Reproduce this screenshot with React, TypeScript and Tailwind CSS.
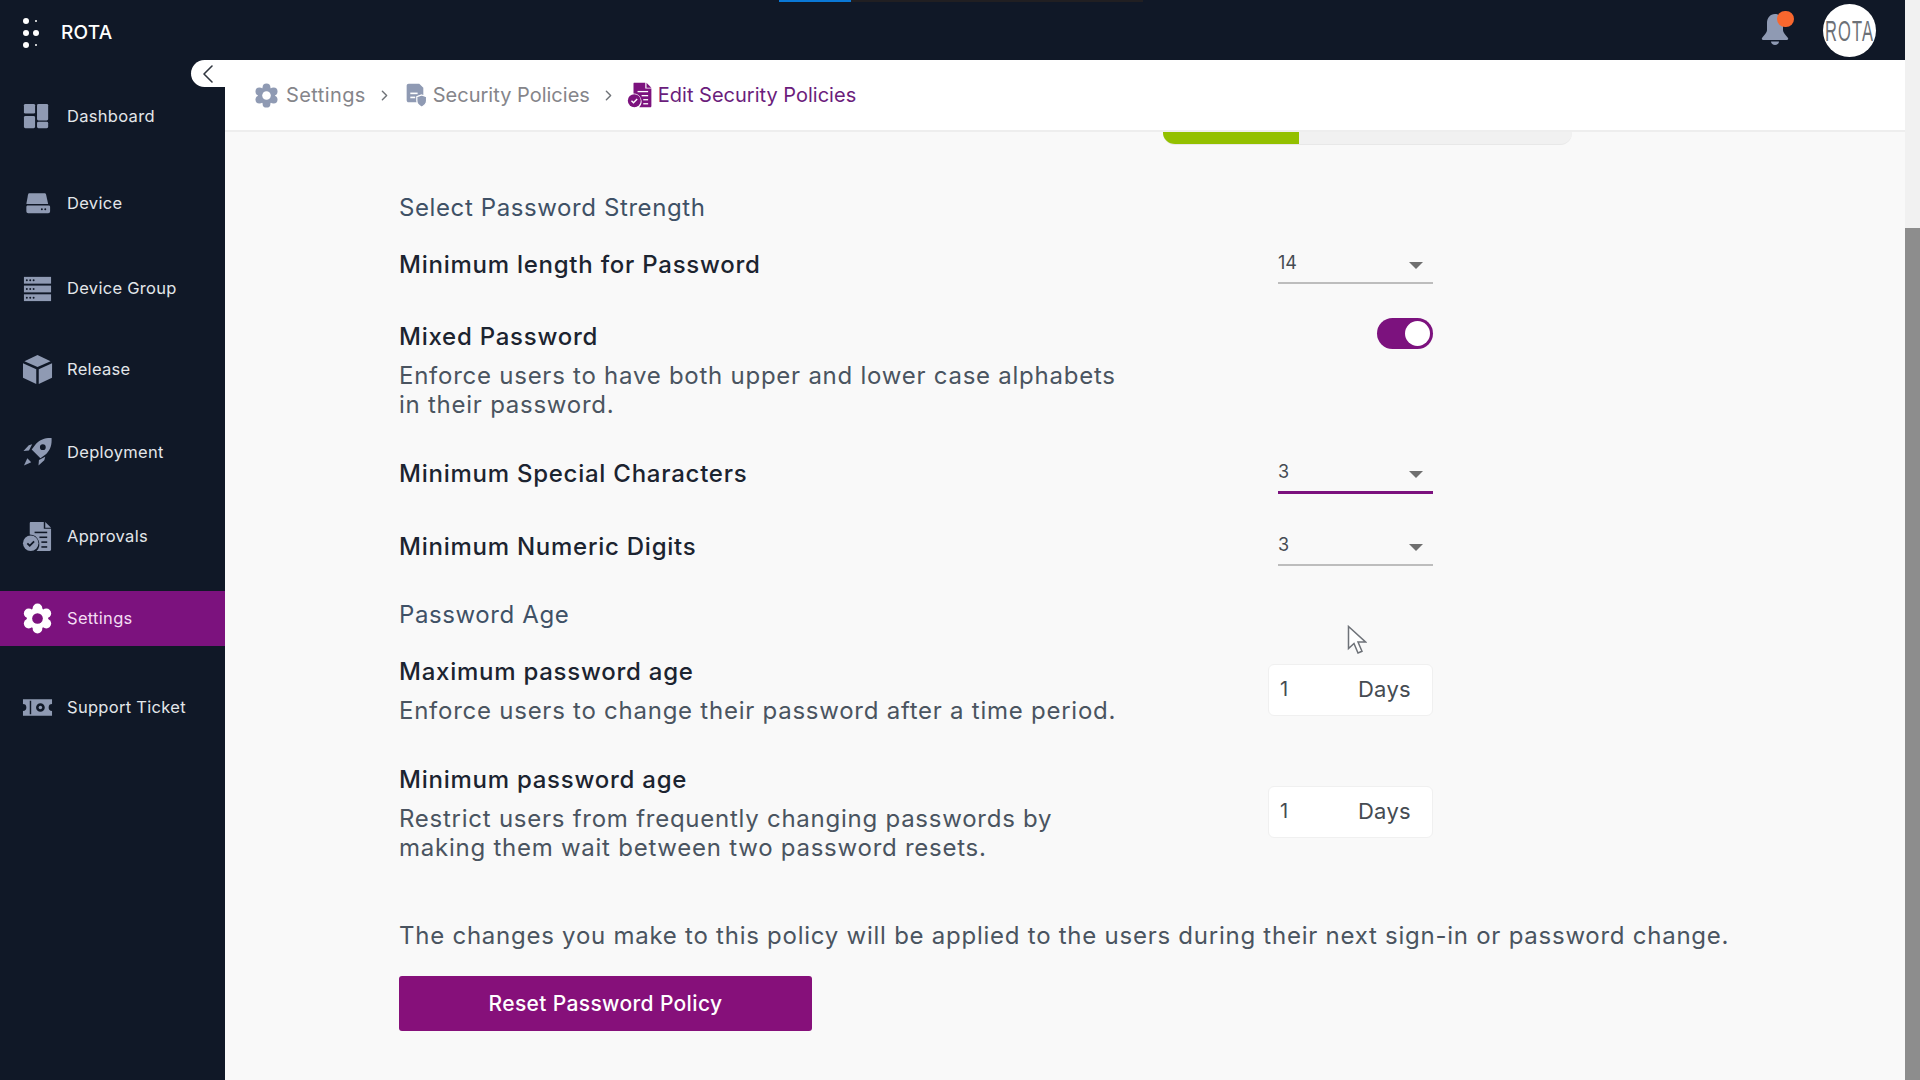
import React from 'react';
import { ChevronLeft, ChevronRight } from 'lucide-react';

const font = { fontFamily: 'Inter, "Liberation Sans", sans-serif' };

function GearIcon({ className, holeClass }: { className?: string; holeClass: string }) {
  const lobes = [0, 60, 120, 180, 240, 300];
  return (
    <svg viewBox="0 0 32 32" className={className} fill="currentColor">
      {lobes.map((a) => (
        <circle
          key={a}
          cx={16 + 10.5 * Math.cos((a * Math.PI) / 180 + Math.PI / 6)}
          cy={16 + 10.5 * Math.sin((a * Math.PI) / 180 + Math.PI / 6)}
          r="5"
        />
      ))}
      <circle cx="16" cy="16" r="11" />
      <circle cx="16" cy="16" r="5.5" className={holeClass} />
    </svg>
  );
}

function DashboardIcon() {
  return (
    <svg viewBox="0 0 32 32" className="w-[31px] h-[31px]" fill="currentColor">
      <rect x="2" y="3" width="11.5" height="10" rx="1.5" />
      <rect x="15.5" y="3" width="11.5" height="17" rx="1.5" />
      <rect x="2" y="15.5" width="11.5" height="12.5" rx="1.5" />
      <rect x="15.5" y="21.5" width="11.5" height="6.5" rx="1.5" />
    </svg>
  );
}

function DeviceIcon() {
  return (
    <svg viewBox="0 0 32 32" className="w-[31px] h-[31px]" fill="currentColor">
      <path d="M8 5.5h15c1 0 1.6.5 1.9 1.5l2.1 9.5H4.5L6.2 7c.2-1 .8-1.5 1.8-1.5z" />
      <path fillRule="evenodd" d="M6 18h21.5c1 0 1.5.6 1.5 1.5v4.5c0 1.2-.8 2-2 2H6.500c-1.200 0-2-.8-2-2v-4.500c0-.9.6-1.500 1.500-1.500zM20.500 21a1 1 0 100 2 1 1 0 000-2zm3.500 0a1 1 0 100 2 1 1 0 000-2z" />
    </svg>
  );
}

function DeviceGroupIcon() {
  const rows = [4, 13, 22];
  return (
    <svg viewBox="0 0 32 32" className="w-[31px] h-[31px]" fill="currentColor">
      {rows.map((y) => (
        <g key={y}>
          <rect x="2" y={y} width="28" height="7" />
          <circle cx="5" cy={y + 3.5} r="1" fill="#101827" />
          <circle cx="8.500" cy={y + 3.5} r="1" fill="#101827" />
          <circle cx="12" cy={y + 3.5} r="1" fill="#101827" />
        </g>
      ))}
    </svg>
  );
}

function ReleaseIcon() {
  return (
    <svg viewBox="0 0 32 32" className="w-[31px] h-[31px]" fill="currentColor">
      <path d="M16 1l13.500 6.500L16 13.500 2.500 7.500z" />
      <path d="M1 9.500l13.700 6.200V31L1 24.500z" />
      <path d="M31 9.500l-13.700 6.200V31L31 24.500z" />
    </svg>
  );
}

function RocketIcon() {
  return (
    <svg viewBox="0 0 32 32" className="w-[31px] h-[31px]" fill="currentColor">
      <path fillRule="evenodd" d="M30.500 1c.5 6.500-1 12-5.500 16.500l-6 4.500-9-9 4.500-6C18.500 2.500 24 .700 30.500 1zM21.500 7.500a3 3 0 100 6 3 3 0 000-6z" />
      <path d="M10.500 7.500l-3.500 1-5.500 6 5.700-.5zM24 20.500l-1 3.500-6 5.500.5-5.700z" />
      <path d="M5.500 22l-3.500 7.500 7.500-3.500z" />
    </svg>
  );
}

function ApprovalIcon({ className, holeClass, strokeClass }: { className?: string; holeClass: string; strokeClass: string }) {
  return (
    <svg viewBox="0 0 32 32" className={className} fill="currentColor">
      <path d="M9 1h13.500v7h7.500v21.500c0 1-.6 1.500-1.500 1.500H15a10 10 0 00-7-17V2.500C8 1.600 8.200 1 9 1z" />
      <path d="M24 1l6 6h-6z" />
      <rect x="13" y="11" width="13" height="1.600" className={holeClass} />
      <rect x="18" y="16" width="8" height="1.600" className={holeClass} />
      <rect x="20" y="21" width="6" height="1.600" className={holeClass} />
      <rect x="20" y="26" width="6" height="1.600" className={holeClass} />
      <circle cx="9" cy="23" r="8" />
      <path d="M5.500 23l2.500 2.500 4.500-4.500" fill="none" strokeWidth="1.800" className={strokeClass} />
    </svg>
  );
}

function TicketIcon() {
  return (
    <svg viewBox="0 0 32 32" className="w-[31px] h-[31px]" fill="currentColor">
      <path fillRule="evenodd" d="M1 7.500h30v5a3.500 3.500 0 000 7v5H1v-5a3.500 3.500 0 000-7zM8 9v14h1.500V9zM19 11.500a4.500 4.500 0 100 9 4.500 4.500 0 000-9z" />
      <circle cx="19" cy="16" r="1.800" />
    </svg>
  );
}

function PolicyIcon() {
  return (
    <svg viewBox="0 0 32 32" className="w-[26px] h-[26px] text-[#8f9ab3]" fill="currentColor">
      <path d="M7 2h13l5 5v9.500h-6V25H7c-1.500 0-2.500-1-2.500-2.500v-18C4.500 3 5.500 2 7 2z" />
      <rect x="9" y="13" width="9" height="2" fill="#fff" />
      <rect x="9" y="18" width="6" height="2" fill="#fff" />
      <path d="M23 16l6 2v5c0 3.500-2.500 6-6 8-3.500-2-6-4.500-6-8v-5z" stroke="#fff" strokeWidth="1.500" />
    </svg>
  );
}

const navItems = [
  { label: 'Dashboard', icon: <DashboardIcon />, gap: 'mt-[29px]' },
  { label: 'Device', icon: <DeviceIcon />, gap: 'mt-[32px]' },
  { label: 'Device Group', icon: <DeviceGroupIcon />, gap: 'mt-[30px]' },
  { label: 'Release', icon: <ReleaseIcon />, gap: 'mt-[26px]' },
  { label: 'Deployment', icon: <RocketIcon />, gap: 'mt-[28px]' },
  {
    label: 'Approvals',
    icon: <ApprovalIcon className="w-[31px] h-[31px]" holeClass="fill-[#101827]" strokeClass="stroke-[#101827]" />,
    gap: 'mt-[29px]',
  },
  { label: 'Settings', icon: <GearIcon className="w-[31px] h-[31px]" holeClass="fill-[#7c127e]" />, gap: 'mt-[27px]', active: true },
  { label: 'Support Ticket', icon: <TicketIcon />, gap: 'mt-[34px]' },
];

function Sidebar() {
  return (
    <aside className="w-[225px] shrink-0 bg-[#101827] flex flex-col">
      {navItems.map((item) => (
        <div
          key={item.label}
          className={`${item.gap} h-[55px] shrink-0 flex items-center gap-[14px] pl-[22px] ${
            item.active ? 'bg-[#7c127e] text-white' : 'text-[#8f9ab3]'
          }`}
        >
          {item.icon}
          <span className={`text-[16.500px] tracking-[0.3px] ${item.active ? 'text-[#f3dcf3]' : 'text-[#e3e6ea]'}`}>
            {item.label}
          </span>
        </div>
      ))}
    </aside>
  );
}

function SelectBox({ value, focused, height }: { value: string; focused?: boolean; height: string }) {
  return (
    <div
      className={`w-[155px] ${height} ml-auto shrink-0 flex items-start justify-between pl-0 pr-[10px] ${
        focused ? 'border-b-[3px] border-[#7c127e]' : 'border-b-2 border-[#bdbdbd]'
      }`}
    >
      <span className="text-[18px] leading-[26px] text-[#454b52]">{value}</span>
      <span className="mt-[12px] w-0 h-0 border-x-[7px] border-x-transparent border-t-[7px] border-t-[#6f6f6f]" />
    </div>
  );
}

function DaysBox({ margin }: { margin: string }) {
  return (
    <div className={`${margin} w-[165px] h-[52px] ml-auto shrink-0 flex items-center justify-between pl-[11px] pr-[21px] pb-[2px] bg-white rounded-md border border-[#f0f0f0]`}>
      <span className="text-[20px] text-[#454b52]">1</span>
      <span className="text-[22px] tracking-[0.3px] text-[#454b52]">Days</span>
    </div>
  );
}

const titleClass = 'text-[24px] leading-[30px] font-[450] text-[#1c2430] tracking-[0.75px]';
const sectionClass = 'text-[24px] leading-[30px] text-[#3f5166] tracking-[0.6px]';
const descClass = 'text-[24px] leading-[29px] text-[#4a5460] tracking-[0.75px]';

export default function App() {
  return (
    <div className="relative h-screen w-full overflow-hidden flex bg-[#f1f1f1]" style={font}>
      <div className="flex-1 min-w-0 flex flex-col">
        {/* top bar */}
        <header className="relative h-[60px] shrink-0 bg-[#101827] flex items-start">
          <div className="absolute top-0 left-[779px] h-[2px] w-[72px] bg-[#0a78d6]" />
          <div className="absolute top-0 left-[851px] h-[2px] w-[292px] bg-[#211f22]" />
          <svg viewBox="0 0 20 32" className="ml-[22px] mt-[17px] w-[20px] h-[32px] text-white" fill="currentColor">
            <circle cx="4" cy="4" r="3" />
            <circle cx="14" cy="4" r="1" />
            <circle cx="4" cy="16" r="3" />
            <circle cx="14" cy="16" r="3" />
            <circle cx="4" cy="28" r="3" />
            <circle cx="14" cy="28" r="1" />
          </svg>
          <span className="ml-[19px] mt-[21px] text-[19px] leading-[24px] font-medium text-white tracking-[0.2px]">ROTA</span>
          <div className="ml-auto mr-[29px] self-center flex items-center gap-[28px]">
            <div className="relative w-[34px] h-[34px]">
              <svg viewBox="0 0 28 32" className="w-[28px] h-[32px] text-[#8f9ab3]" fill="currentColor">
                <path d="M14 1c5 0 8 4 8 9v7c0 3 3 5 5 8 .5 1 0 2-1 2H2c-1 0-1.500-1-1-2 2-3 5-5 5-8v-7c0-5 3-9 8-9z" />
                <path d="M10 28.500h8c0 2-2 3.500-4 3.500s-4-1.500-4-3.500z" />
              </svg>
              <span className="absolute -top-[2px] left-[16px] w-[17px] h-[16px] rounded-full bg-[#f8672e]" />
            </div>
            <div className="w-[53px] h-[53px] rounded-full bg-white flex items-center justify-center overflow-hidden">
              <span className="text-[30px] text-[#6d7177] scale-x-[0.55] tracking-[2px]" style={{ fontFamily: '"Liberation Sans", sans-serif' }}>
                ROTA
              </span>
            </div>
          </div>
        </header>

        <div className="flex-1 min-h-0 flex">
          <Sidebar />

          <main className="flex-1 min-w-0 flex flex-col bg-[#f9f9f9]">
            {/* breadcrumb */}
            <nav className="h-[72px] shrink-0 bg-white border-b-2 border-[#eeeeee] flex items-center pl-[29px] text-[20px]">
              <GearIcon className="w-[25px] h-[25px] text-[#8f9ab3]" holeClass="fill-white" />
              <span className="ml-[7px] text-[#85858a] tracking-[0.4px]">Settings</span>
              <ChevronRight className="w-[17px] h-[17px] mx-[10px] text-[#6f7378]" />
              <PolicyIcon />
              <span className="ml-[4px] text-[#85858a]">Security Policies</span>
              <ChevronRight className="w-[17px] h-[17px] mx-[10px] text-[#6f7378]" />
              <ApprovalIcon className="w-[26px] h-[26px] text-[#7c127e]" holeClass="fill-white" strokeClass="stroke-white" />
              <span className="ml-[5px] text-[#6b1d7c]">Edit Security Policies</span>
            </nav>

            <div className="flex-1 min-h-0 overflow-hidden">
              {/* strength meter, scrolled under the header */}
              <div className="ml-[938px] w-[409px] h-[13px] flex rounded-b-[12px] overflow-hidden bg-[#f1f1f1] border-b border-[#e8e8e8]">
                <div className="w-[136px] bg-[#93c000]" />
              </div>

              <div className="pl-[174px] w-[1208px]">
                <h3 className={`mt-[47.500px] ${sectionClass}`}>Select Password Strength</h3>

                <div className="mt-[27px] h-[30px] flex">
                  <div className={titleClass}>Minimum length for Password</div>
                  <SelectBox value="14" height="h-[34px]" />
                </div>

                <div className="mt-[42px] flex items-start">
                  <div className="w-[760px]">
                    <div className={titleClass}>Mixed Password</div>
                    <p className={`mt-[9px] ${descClass}`}>
                      Enforce users to have both upper and lower case alphabets
                      <br />
                      in their password.
                    </p>
                  </div>
                  <div className="ml-auto -mt-[4px] w-[56px] h-[31px] rounded-full bg-[#7c127e] flex items-center justify-end pr-[3px]">
                    <span className="w-[25px] h-[25px] rounded-full bg-white" />
                  </div>
                </div>

                <div className="mt-[40.500px] h-[30px] flex">
                  <div className={titleClass}>Minimum Special Characters</div>
                  <SelectBox value="3" focused height="h-[35px]" />
                </div>

                <div className="mt-[43px] h-[30px] flex">
                  <div className={titleClass}>Minimum Numeric Digits</div>
                  <SelectBox value="3" height="h-[34px]" />
                </div>

                <h3 className={`mt-[38px] ${sectionClass}`}>Password Age</h3>

                <div className="mt-[27px] flex items-start">
                  <div className="w-[760px]">
                    <div className={titleClass}>Maximum password age</div>
                    <p className={`mt-[9px] ${descClass}`}>Enforce users to change their password after a time period.</p>
                  </div>
                  <DaysBox margin="mt-[7px]" />
                </div>

                <div className="mt-[40px] flex items-start">
                  <div className="w-[760px]">
                    <div className={titleClass}>Minimum password age</div>
                    <p className={`mt-[9px] ${descClass}`}>
                      Restrict users from frequently changing passwords by
                      <br />
                      making them wait between two password resets.
                    </p>
                  </div>
                  <DaysBox margin="mt-[21px]" />
                </div>

                <p className={`mt-[59px] whitespace-nowrap ${descClass} leading-[30px]`}>
                  The changes you make to this policy will be applied to the users during their next sign-in or password change.
                </p>

                <button className="mt-[25px] w-[413px] h-[55px] rounded-[3px] bg-[#86107a] text-white text-[21px] font-medium tracking-[0.35px]">
                  Reset Password Policy
                </button>
              </div>
            </div>
          </main>
        </div>
      </div>

      {/* page scrollbar */}
      <div className="w-[15px] shrink-0 flex flex-col bg-[#f1f1f1]">
        <div className="mt-[228px] flex-1 bg-[#8d8d8d]" />
      </div>

      {/* sidebar collapse tab */}
      <div className="absolute top-[60px] left-[191px] w-[34px] h-[27px] bg-white rounded-l-full flex items-center justify-start pl-[1px]">
        <ChevronLeft className="w-[32px] h-[32px] text-[#30363f]" strokeWidth={1.2} />
      </div>

      {/* mouse cursor */}
      <svg viewBox="0 0 20 30" className="absolute left-[1347px] top-[625px] w-[20px] h-[30px]">
        <path d="M1.500 1.500v22l5.500-5 4 9.500 4-1.700-4-9.300h7.500z" fill="#fff" stroke="#6e7278" strokeWidth="1.500" />
      </svg>
    </div>
  );
}
